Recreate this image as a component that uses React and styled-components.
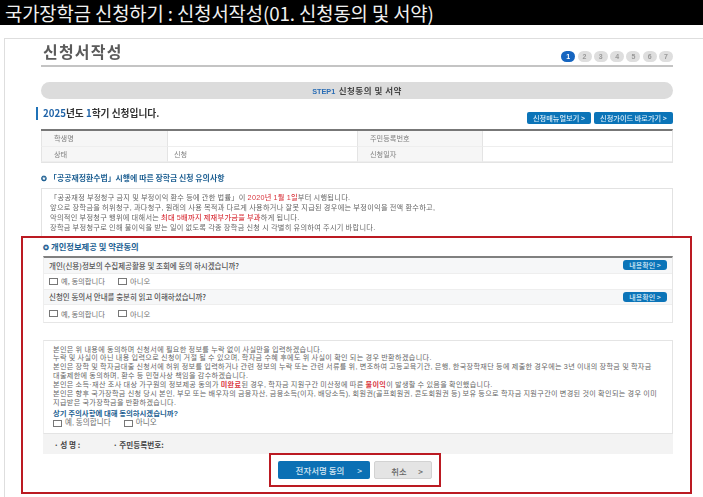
import React from 'react';
import styled, { createGlobalStyle } from 'styled-components';

const Global = createGlobalStyle`
  html, body { margin: 0; padding: 0; background: #fff; }
  body { width: 703px; height: 497px; overflow: hidden; font-family: "Noto Sans CJK KR", "Noto Sans", sans-serif; }
  * { box-sizing: border-box; }
`;

const Page = styled.div`width: 703px; height: 497px; overflow: hidden; display: flex; flex-direction: column;`;
const Banner = styled.header`
  height: 25px; background: #000; color: #f0f0f0; font-size: 18.8px; line-height: 25px;
  padding-left: 5px; white-space: nowrap; flex: none; letter-spacing: -0.1px;
`;
const Card = styled.main`
  margin: 13px 0 0 4px; flex: 1; border: 1px solid #dedede; border-right: 0; border-bottom: 0;
  padding: 0 30px 0 36px; display: flex; flex-direction: column; filter: blur(0.45px);
`;
const TitleRow = styled.div`
  height: 28px; border-bottom: 2px solid #c4c4c4; display: flex; justify-content: space-between; align-items: flex-start;
`;
const PageTitle = styled.h1`margin: 0; font-size: 16px; line-height: 25px; font-weight: 700; color: #5b5b5b; letter-spacing: 1.2px; padding-left: 2px;`;
const Steps = styled.ol`list-style: none; margin: 12px 0 0; padding: 0; display: flex; gap: 2.3px;`;
const Step = styled.li`
  width: 14px; height: 11px; border-radius: 6px; font: 700 7px/11px "Liberation Sans", sans-serif; text-align: center;
  background: ${p => p.$on ? '#1565c0' : '#dedede'}; color: ${p => p.$on ? '#fff' : '#999'};
`;
const StepBar = styled.div`
  margin-top: 15px; height: 17px; border-radius: 9px; background: #dcdcdc; text-align: center;
  font-size: 8.5px; line-height: 17px; font-weight: 700; color: #444; letter-spacing: .5px;
  b { color: #2a6db5; font: 700 7.3px/17px "Liberation Sans", sans-serif; letter-spacing: 0; margin-right: 1px; }
`;
const HeadRow = styled.div`height: 30px; display: flex; justify-content: space-between; align-items: flex-end; padding-bottom: 5px;`;
const Term = styled.h2`
  align-self: flex-start; margin: 8px 0 0 -5px; border-left: 2px solid #1f72b8; padding-left: 5px; font-size: 9.7px; line-height: 13px; font-weight: 700; color: #333;
  em { font-style: normal; color: #1f63a8; }
`;
const Links = styled.div`display: flex; gap: 3px;`;
const BlueBtn = styled.button`
  border: 0; background: #0b74b8; color: #d8ebf7; border-radius: 2px; padding: 0; font: 500 7.2px/12px "Noto Sans CJK KR", sans-serif;
  height: 12px; width: ${p => p.$w}px; white-space: nowrap;
`;
const InfoTable = styled.div`
  border-top: 2px solid #777; display: grid; grid-template-columns: 127px 189px 126px 1fr; font-size: 7.2px; color: #808080;
  border-bottom: 1px solid #e4e4e4; border-right: 1px solid #e4e4e4;
`;
const Label = styled.div`height: 15.5px; line-height: 15px; background: #f6f6f6; padding-left: 12px; border-bottom: 1px solid #eee; border-right: 1px solid #e4e4e4; border-left: 1px solid #e4e4e4;`;
const Value = styled.div`height: 15.5px; line-height: 15px; padding-left: 6px; border-bottom: 1px solid #eee;`;
const SubTitle = styled.h3`
  margin: ${p => p.$top}px 0 0; font-size: ${p => p.$size}px; line-height: 10px; font-weight: 700; color: #1d5f92; white-space: nowrap;
  &::before { content: "✪"; color: #1d5f92; margin-right: 2px; font-size: 7px; }
`;
const BodyCopy = styled.section`
  font-family: "Liberation Sans", "Noto Sans CJK KR", sans-serif; color: #666; word-spacing: -0.4px;
  white-space: nowrap; overflow: hidden;
`;
const NoticeBox = styled(BodyCopy)`
  font-size: 7.2px; letter-spacing: .29px;
  margin-top: 5px; height: 48px; border: 1px solid #e2e2e2; border-bottom: 0; padding: 4px 0 0 8px; line-height: 10px;
  b { font-weight: 500; color: #d9363e; }
`;
const RedFrame = styled.section`
  margin: 0 -19px 0 -20px; border: 2px solid #bb1a22; height: 258px; padding: 3px 17px 0 20px; display: flex; flex-direction: column; background: #fff;
`;
const ConsentTable = styled.div`margin-top: 4px; border-top: 2px solid #808080; border-bottom: 1px solid #e6e6e6; border-left: 1px solid #eee; border-right: 1px solid #e6e6e6;`;
const Question = styled.div`
  height: 15.5px; background: #f6f7f8; display: flex; align-items: center; justify-content: space-between; padding: 0 5px;
  font-size: 7.5px; font-weight: 500; color: #555; border-bottom: 1px solid #eee;
`;
const SmallBtn = styled(BlueBtn)`border-radius: 3px; height: 10px; font-size: 7px; line-height: 10px;`;
const Answers = styled.div`height: ${p => p.$last ? 17 : 16}px; display: flex; align-items: center; padding-left: 5px; gap: 13px; border-bottom: ${p => p.$last ? '0' : '1px solid #eee'}; font-size: 7.3px; color: #707070;`;
const Choice = styled.label`display: flex; align-items: center; gap: 3px;`;
const Box = styled.span`width: 9px; height: 7px; border: 1px solid #777; background: #fff; display: block;`;
const Pledge = styled(BodyCopy)`
  font-size: 7.1px; letter-spacing: .36px;
  margin-top: 17px; height: 94px; border: 1px solid #e4e4e4; border-left-color: #eee; padding: 4.5px 0 0 9px; line-height: 8.9px;
  b { font-weight: 700; color: #d9363e; }
`;
const Ask = styled.div`margin-top: 1px; font-size: 7.4px; letter-spacing: 0; line-height: 10px; font-weight: 700; color: #1d5f92;`;
const PledgeChoices = styled(Answers)`padding-left: 0; height: 10px; margin-top: 0; font-size: 7.6px; letter-spacing: 0;`;
const Signer = styled.div`height: 20px; background: #f3f3f3; display: flex; align-items: center; gap: 33px; padding-left: 11px; font-size: 7.6px; font-weight: 700; color: #444;`;
const Actions = styled.div`
  align-self: center; margin: -1px 0 0 -6px; width: 172px; height: 34px; border: 2px solid #bb1a22;
  display: flex; justify-content: center; align-items: center; gap: 4px;
`;
const Submit = styled.button`
  width: 92px; height: 18px; border: 0; border-radius: 2px; background: #0b70b4; color: #d5e7f3; padding: 0 8px 0 0; font: 500 8.5px/18px "Noto Sans CJK KR", sans-serif;
  position: relative; &::after { content: ">"; position: absolute; right: 8px; }
`;
const Cancel = styled(Submit)`width: 58px; background: #e4e4e4; color: #666; border: 1px solid #d2d2d2; font-size: 8.3px;`;

function Options() {
  return <>
    <Choice><Box />예, 동의합니다</Choice>
    <Choice><Box />아니오</Choice>
  </>;
}

export default function App() {
  return (
    <Page>
      <Global />
      <Banner>국가장학금 신청하기 : 신청서작성(01. 신청동의 및 서약)</Banner>
      <Card>
        <TitleRow>
          <PageTitle>신청서작성</PageTitle>
          <Steps>{[1,2,3,4,5,6,7].map(n => <Step key={n} $on={n === 1}>{n}</Step>)}</Steps>
        </TitleRow>
        <StepBar><b>STEP1</b> 신청동의 및 서약</StepBar>
        <HeadRow>
          <Term><em>2025</em>년도 <em>1</em>학기 신청입니다.</Term>
          <Links>
            <BlueBtn $w={64}>신청매뉴얼보기 &gt;</BlueBtn>
            <BlueBtn $w={79}>신청가이드 바로가기 &gt;</BlueBtn>
          </Links>
        </HeadRow>
        <InfoTable>
          <Label>학생명</Label><Value />
          <Label>주민등록번호</Label><Value />
          <Label>상태</Label><Value>신청</Value>
          <Label>신청일자</Label><Value />
        </InfoTable>
        <SubTitle $top={10} $size={7.9}>「공공재정환수법」시행에 따른 장학금 신청 유의사항</SubTitle>
        <NoticeBox>
          「공공재정 부정청구 금지 및 부정이익 환수 등에 관한 법률」이 <b>2020년 1월 1일</b>부터 시행됩니다.<br />
          앞으로 장학금을 허위청구, 과다청구, 원래의 사용 목적과 다르게 사용하거나 잘못 지급된 경우에는 부정이익을 전액 환수하고,<br />
          악의적인 부정청구 행위에 대해서는 <b>최대 5배까지 제재부가금을 부과</b>하게 됩니다.<br />
          장학금 부정청구로 인해 불이익을 받는 일이 없도록 각종 장학금 신청 시 각별히 유의하여 주시기 바랍니다.
        </NoticeBox>
        <RedFrame>
          <SubTitle $top={0} $size={8.3}>개인정보제공 및 약관동의</SubTitle>
          <ConsentTable>
            <Question>개인(신용)정보의 수집제공활용 및 조회에 동의 하시겠습니까?<SmallBtn $w={44}>내용확인 &gt;</SmallBtn></Question>
            <Answers><Options /></Answers>
            <Question>신청인 동의서 안내를 충분히 읽고 이해하셨습니까?<SmallBtn $w={44}>내용확인 &gt;</SmallBtn></Question>
            <Answers $last><Options /></Answers>
          </ConsentTable>
          <Pledge>
            본인은 위 내용에 동의하며 신청서에 필요한 정보를 누락 없이 사실만을 입력하겠습니다.<br />
            누락 및 사실이 아닌 내용 입력으로 신청이 거절 될 수 있으며, 학자금 수혜 후에도 위 사실이 확인 되는 경우 반환하겠습니다.<br />
            본인은 장학 및 학자금대출 신청서에 허위 정보를 입력하거나 관련 정보의 누락 또는 관련 서류를 위, 변조하여 고등교육기관, 은행, 한국장학재단 등에 제출한 경우에는 3년 이내의 장학금 및 학자금<br />
            대출제한에 동의하며, 환수 등 민형사상 책임을 감수하겠습니다.<br />
            본인은 소득·재산 조사 대상 가구원의 정보제공 동의가 <b>미완료</b>된 경우, 학자금 지원구간 미산정에 따른 <b>불이익</b>이 발생할 수 있음을 확인했습니다.<br />
            본인은 향후 국가장학금 신청 당시 본인, 부모 또는 배우자의 금융자산, 금융소득(이자, 배당소득), 회원권(골프회원권, 콘도회원권 등) 보유 등으로 학자금 지원구간이 변경된 것이 확인되는 경우 이미<br />
            지급받은 국가장학금을 반환하겠습니다.
            <Ask>상기 주의사항에 대해 동의하시겠습니까?</Ask>
            <PledgeChoices $last><Options /></PledgeChoices>
          </Pledge>
          <Signer><span>· 성 명 :</span><span>· 주민등록번호:</span></Signer>
          <Actions>
            <Submit>전자서명 동의</Submit>
            <Cancel>취소</Cancel>
          </Actions>
        </RedFrame>
      </Card>
    </Page>
  );
}
